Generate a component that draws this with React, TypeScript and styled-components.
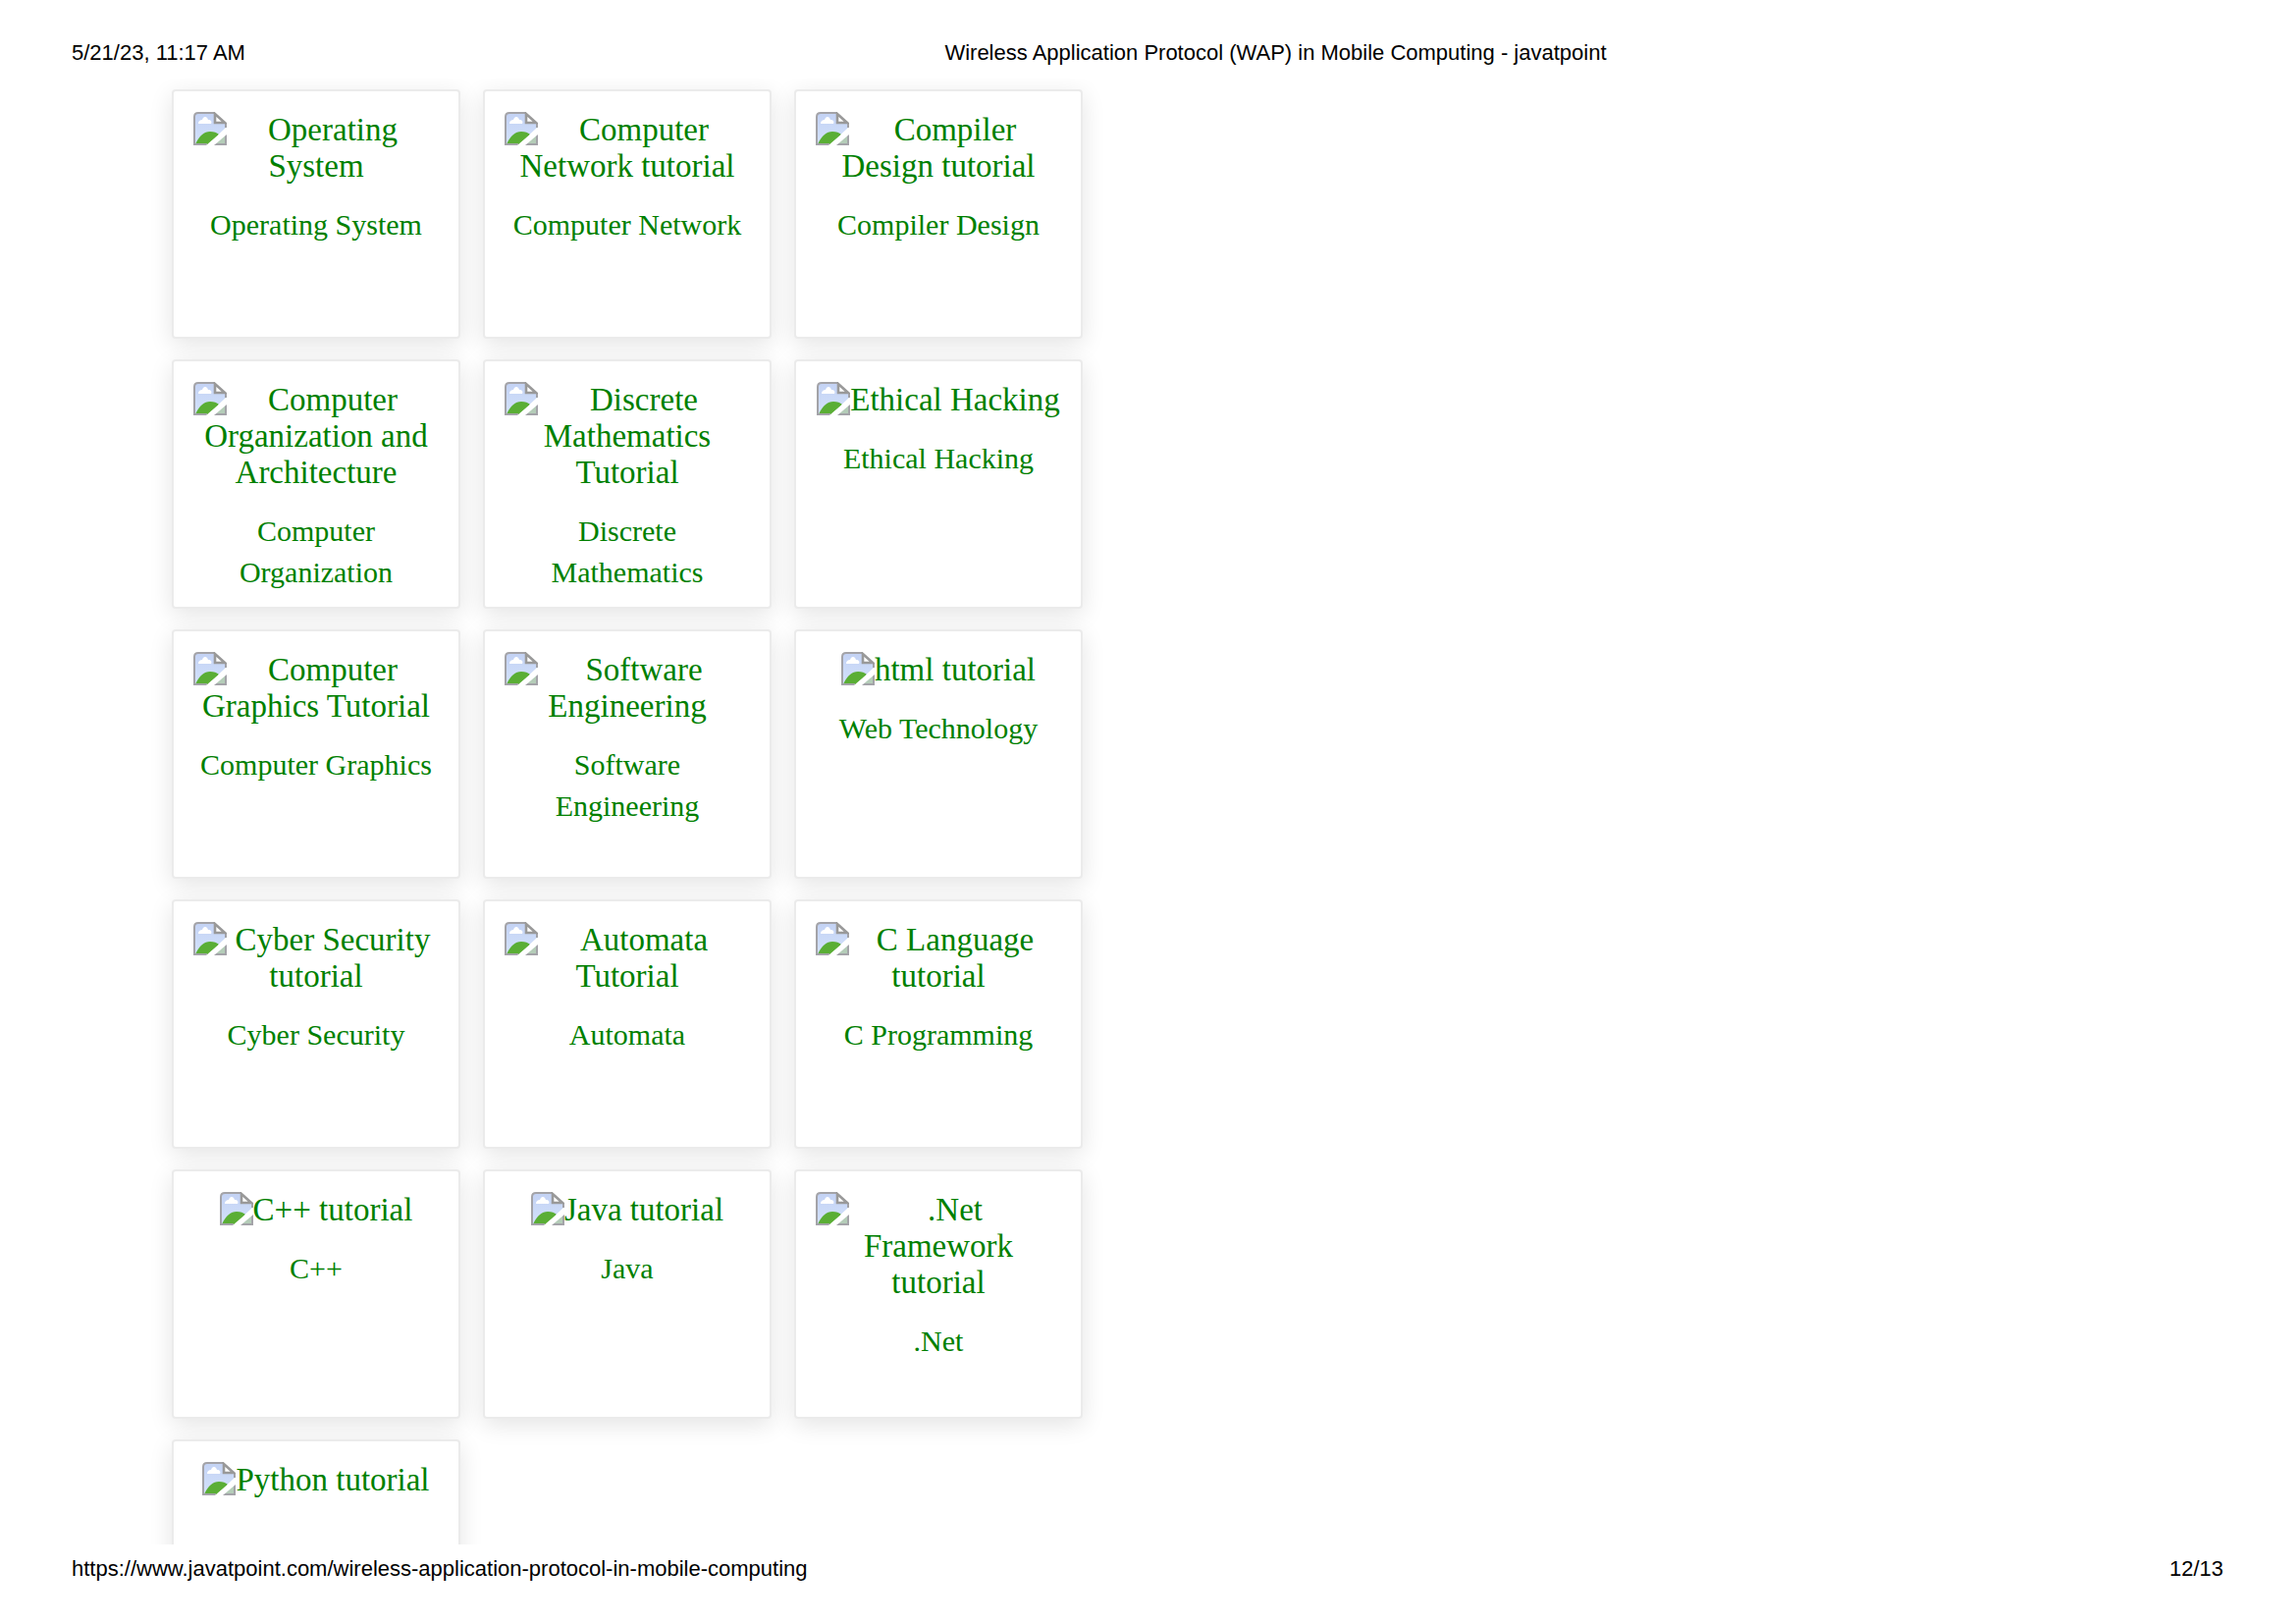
import React from "react";
import styled, { createGlobalStyle } from "styled-components";

const GlobalStyle = createGlobalStyle`
  *, *::before, *::after { box-sizing: border-box; }
  body { margin: 0; background: #fff; }
`;

const Page = styled.div`
  display: flex;
  flex-direction: column;
  height: 100vh;
  overflow: hidden;
`;

const PageHeader = styled.header`
  display: flex;
  gap: 84px;
  padding: 41px 74px 0 73px;
  height: 80px;
  font: 22px/25px "Liberation Sans", Arial, sans-serif;
  color: #000;
`;

const DocumentTitle = styled.div`
  flex: 1;
  text-align: center;
`;

const Content = styled.main`
  flex: 1;
  min-height: 0;
  overflow: hidden;
  padding: 11px 175px 0;
`;

const CardGrid = styled.ul`
  display: grid;
  grid-template-columns: repeat(3, 294px);
  grid-auto-rows: 254px;
  gap: 21px 23px;
  margin: 0;
  padding: 0;
  list-style: none;
`;

const Card = styled.li`
  padding: 21px 20px 20px;
  border: 2px solid #ebebeb;
  border-radius: 4px;
  background: #fff;
  box-shadow: 0 6px 24px rgba(0, 0, 0, 0.11);
  text-align: center;
  font-family: "Liberation Serif", "Times New Roman", serif;
`;

const CardLink = styled.a`
  display: block;
  color: #008000;
  text-decoration: none;
`;

const MissingImage = styled.span`
  display: inline-block;
  vertical-align: top;
  max-width: 100%;
  font-size: 33px;
  line-height: 37px;
`;

const MissingIcon = styled.svg`
  float: left;
  width: 34px;
  height: 34px;
`;

const Label = styled.p`
  margin: 20px 0 0;
  font-size: 30px;
  line-height: 42px;
`;

const PageFooter = styled.footer`
  display: flex;
  justify-content: space-between;
  height: 80px;
  padding: 12px 74px 0 73px;
  font: 22px/25px "Liberation Sans", Arial, sans-serif;
  color: #000;
`;

const tutorials = [
  { alt: "Operating System", label: "Operating System" },
  { alt: "Computer Network tutorial", label: "Computer Network" },
  { alt: "Compiler Design tutorial", label: "Compiler Design" },
  { alt: "Computer Organization and Architecture", label: "Computer Organization" },
  { alt: "Discrete Mathematics Tutorial", label: "Discrete Mathematics" },
  { alt: "Ethical Hacking", label: "Ethical Hacking" },
  { alt: "Computer Graphics Tutorial", label: "Computer Graphics" },
  { alt: "Software Engineering", label: "Software Engineering" },
  { alt: "html tutorial", label: "Web Technology" },
  { alt: "Cyber Security tutorial", label: "Cyber Security" },
  { alt: "Automata Tutorial", label: "Automata" },
  { alt: "C Language tutorial", label: "C Programming" },
  { alt: "C++ tutorial", label: "C++" },
  { alt: "Java tutorial", label: "Java" },
  { alt: ".Net Framework tutorial", label: ".Net" },
  { alt: "Python tutorial", label: "" },
];

function BrokenImage() {
  return (
    <MissingIcon viewBox="0 0 34 34" aria-hidden="true">
      <defs>
        <linearGradient id="sky" x1="0" y1="0" x2="0" y2="1">
          <stop offset="0" stopColor="#c3d2f4" />
          <stop offset="1" stopColor="#d3e2fb" />
        </linearGradient>
      </defs>
      <path d="M4 1H22L33 11V16L15 33H1V4Z" fill="url(#sky)" />
      <path d="M5 12C5 9 7 8 9 8C10 4 14 4 15 8C18 8 19 10 18 12Z" fill="#fff" />
      <path d="M2 33C6 24 11 20 17 20C21 20 24 21 26 23L15 33Z" fill="#5aae35" />
      <path d="M21 33L33 22V33Z" fill="#b4ccb8" />
      <path
        d="M22 1H5Q1 1 1 5V33H14M20 33H33V23M33 16V11"
        fill="none"
        stroke="#a3a3a8"
        strokeWidth="2"
      />
      <path d="M22 2V11H32Z" fill="#fff" stroke="#999" strokeWidth="2.6" />
      <path d="M13 34L34 16V23L21 34Z" fill="#fff" />
    </MissingIcon>
  );
}

export default function App() {
  return (
    <>
      <GlobalStyle />
      <Page>
        <PageHeader>
          <time>5/21/23, 11:17 AM</time>
          <DocumentTitle>
            Wireless Application Protocol (WAP) in Mobile Computing - javatpoint
          </DocumentTitle>
        </PageHeader>
        <Content>
          <CardGrid>
            {tutorials.map(({ alt, label }) => (
              <Card key={alt}>
                <CardLink href="#">
                  <MissingImage>
                    <BrokenImage />
                    {alt}
                  </MissingImage>
                  {label && <Label>{label}</Label>}
                </CardLink>
              </Card>
            ))}
          </CardGrid>
        </Content>
        <PageFooter>
          <span>https://www.javatpoint.com/wireless-application-protocol-in-mobile-computing</span>
          <span>12/13</span>
        </PageFooter>
      </Page>
    </>
  );
}
